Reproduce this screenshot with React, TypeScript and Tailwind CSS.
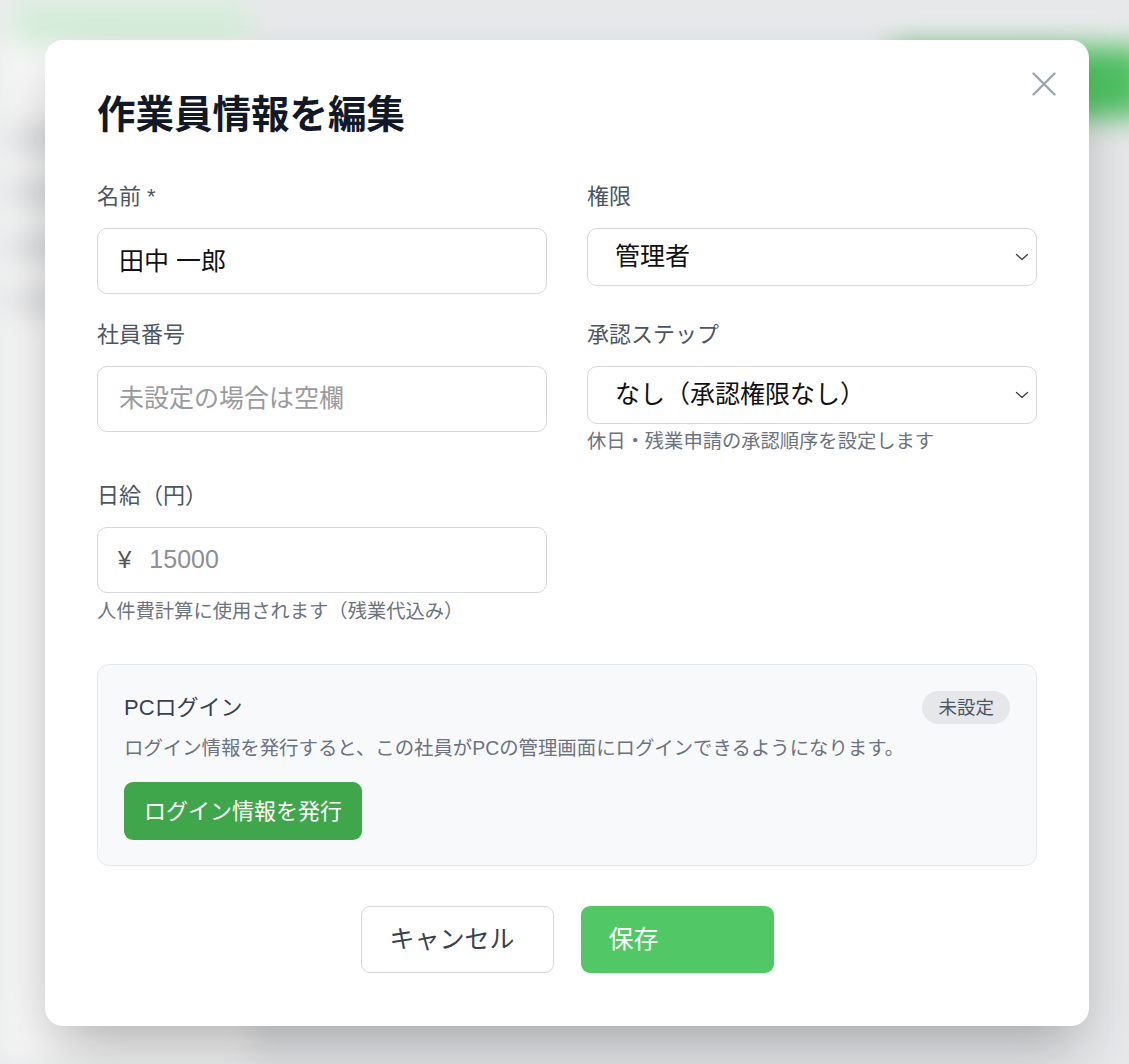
import React from "react";

function Chevron() {
  return (
    <svg width="14" height="8" viewBox="0 0 14 8" fill="none" className="pointer-events-none absolute right-[8px] top-1/2 -translate-y-1/2">
      <path d="M1.5 1.5L7 6.5L12.5 1.5" stroke="#3f3f46" strokeWidth="1.3" strokeLinecap="round" strokeLinejoin="round" />
    </svg>
  );
}

function CloseIcon() {
  return (
    <svg width="24" height="24" viewBox="0 0 24 24" fill="none">
      <path d="M1.5 1.5L22.5 22.5M22.5 1.5L1.5 22.5" stroke="#9ca3af" strokeWidth="2.4" strokeLinecap="round" />
    </svg>
  );
}

function Label({ children }: { children: React.ReactNode }) {
  return <div className="mb-4 h-[30px] text-[22px] leading-[30px] text-[#4b5563]">{children}</div>;
}

function BackdropPage() {
  return (
    <div className="flex h-full blur-[14px]">
      <aside className="w-[250px] shrink-0 bg-white pt-[4px]">
        <div className="ml-[10px] h-[40px] w-[240px] rounded-xl bg-[#d8f3dd]" />
        <div className="mt-[86px] flex flex-col gap-[36px] pl-[14px]">
          <div className="h-[18px] w-[120px] rounded bg-[#d4d6da]" />
          <div className="h-[18px] w-[140px] rounded bg-[#d4d6da]" />
          <div className="h-[18px] w-[110px] rounded bg-[#d4d6da]" />
          <div className="h-[18px] w-[130px] rounded bg-[#d9dbde]" />
        </div>
      </aside>
      <main className="flex-1 bg-[#eff0f2]">
        <div className="flex justify-end pt-[46px]">
          <div className="-mr-[20px] h-[72px] w-[260px] rounded-xl bg-[#52c766]" />
        </div>
      </main>
    </div>
  );
}

export default function App() {
  return (
    <div className="relative h-[1064px] w-full overflow-hidden bg-[#eff0f2] font-['Liberation_Sans','Noto_Sans_CJK_JP',sans-serif]">
      <BackdropPage />
      <div className="absolute inset-0 bg-black/[0.03] pl-[45px] pt-[40px]">
        <div className="relative w-[1044px] rounded-[18px] bg-white px-[52px] pb-[53px] pt-[50px] shadow-[0_30px_60px_-10px_rgba(0,0,0,0.28)]">
          <button aria-label="閉じる" className="absolute right-[33px] top-[32px]">
            <CloseIcon />
          </button>

          <h2 className="h-[49px] text-[38.5px] font-bold leading-[49px] text-[#111827]">作業員情報を編集</h2>

          <div className="mt-[43px] grid grid-cols-2 items-start gap-x-[40px] gap-y-[26px]">
            <div>
              <Label>名前 *</Label>
              <input
                defaultValue="田中 一郎"
                className="h-[66px] w-full rounded-[10px] border border-[#d4d6db] px-[21px] pb-[4px] text-[25px] text-[#111] outline-none"
              />
            </div>
            <div>
              <Label>権限</Label>
              <div className="relative">
                <select
                  defaultValue="admin"
                  className="h-[58px] w-full appearance-none rounded-[10px] border border-[#d4d6db] bg-white pl-[27px] text-[25px] text-[#111] outline-none"
                >
                  <option value="admin">管理者</option>
                  <option value="member">一般</option>
                </select>
                <Chevron />
              </div>
            </div>

            <div>
              <Label>社員番号</Label>
              <input
                placeholder="未設定の場合は空欄"
                className="h-[66px] w-full rounded-[10px] border border-[#d4d6db] px-[21px] pb-[2px] text-[25px] text-[#111] outline-none placeholder:text-[#9a9a9e]"
              />
            </div>
            <div>
              <Label>承認ステップ</Label>
              <div className="relative">
                <select
                  defaultValue="none"
                  className="h-[58px] w-full appearance-none rounded-[10px] border border-[#d4d6db] bg-white pl-[27px] text-[25px] text-[#111] outline-none"
                >
                  <option value="none">なし（承認権限なし）</option>
                  <option value="1">ステップ1</option>
                </select>
                <Chevron />
              </div>
              <p className="mt-[5px] text-[19.3px] leading-[26px] text-[#6b7280]">休日・残業申請の承認順序を設定します</p>
            </div>

            <div>
              <Label>日給（円）</Label>
              <div className="flex h-[66px] w-full items-center rounded-[10px] border border-[#d4d6db] pl-[20px]">
                <span className="text-[24px] text-[#555]">¥</span>
                <input
                  placeholder="15000"
                  className="ml-[18px] min-w-0 flex-1 text-[25px] text-[#111] outline-none placeholder:text-[#8e8e93]"
                />
              </div>
              <p className="mt-[6px] text-[19.3px] leading-[26px] text-[#6b7280]">人件費計算に使用されます（残業代込み）</p>
            </div>
            <div />
          </div>

          <section className="mt-[39px] rounded-[12px] border border-[#e5e7eb] bg-[#f8f9fb] px-[26px] pb-[25px] pt-[26px]">
            <div className="flex h-[33px] items-center justify-between">
              <h3 className="text-[22px] text-[#374151]">PCログイン</h3>
              <span className="flex h-[33px] items-center rounded-full bg-[#e5e7eb] px-[16px] text-[18.5px] text-[#4b5563]">未設定</span>
            </div>
            <p className="mt-[11px] text-[19.4px] leading-[26px] text-[#6b7280]">
              ログイン情報を発行すると、この社員がPCの管理画面にログインできるようになります。
            </p>
            <button className="mt-[21px] h-[58px] rounded-[9px] bg-[#3fa64b] px-[20px] text-[22px] text-white">
              ログイン情報を発行
            </button>
          </section>

          <div className="mt-[40px] flex justify-center gap-[27px]">
            <button className="h-[67px] w-[193px] rounded-[9px] border border-[#d4d6db] bg-white px-[28px] text-left text-[25px] text-[#374151]">
              キャンセル
            </button>
            <button className="h-[67px] w-[193px] rounded-[9px] bg-[#52c766] px-[28px] text-left text-[25px] text-white">
              保存
            </button>
          </div>
        </div>
      </div>
    </div>
  );
}
